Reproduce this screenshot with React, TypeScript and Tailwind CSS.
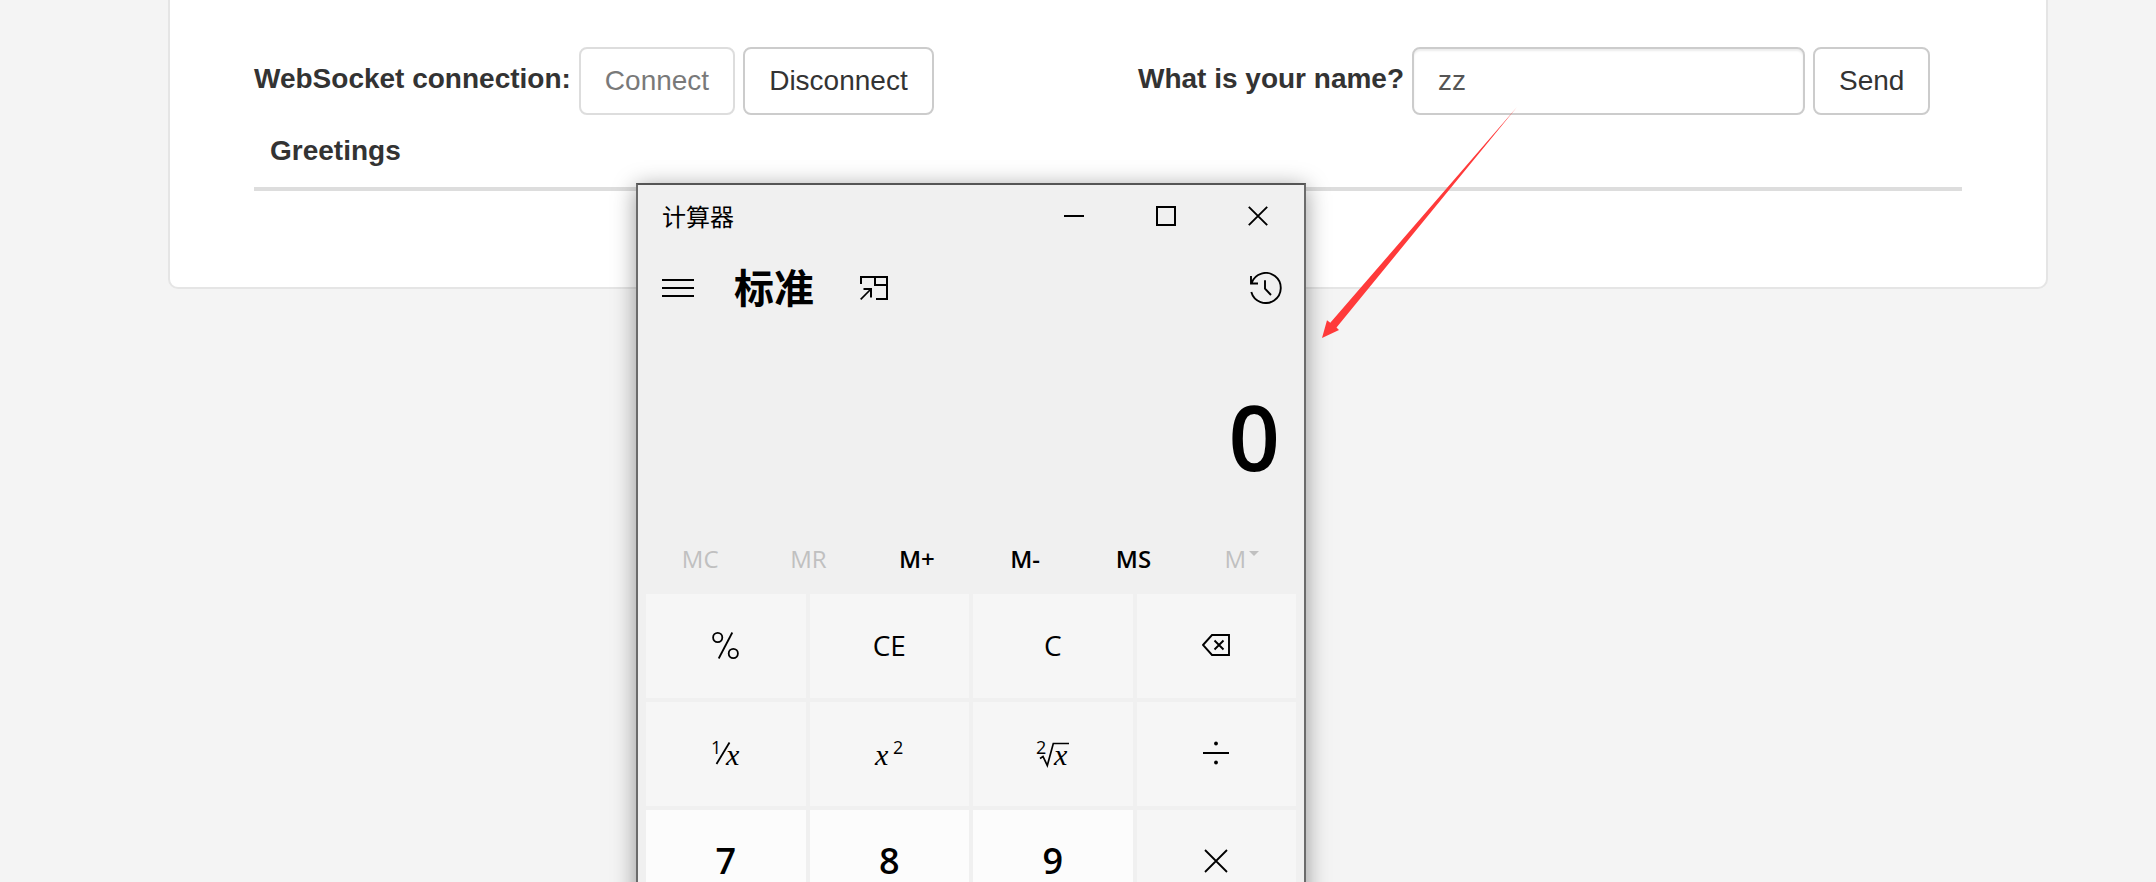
import type { ReactNode } from "react";

const button =
  "h-[68px] shrink-0 rounded-lg border-2 border-[#ccc] bg-white px-6 text-[28px] leading-10 text-[#333] disabled:opacity-65";

function ConnectionPanel() {
  return (
    <main className="rounded-b-[10px] border-2 border-t-0 border-[#e5e5e5] bg-white px-[84px] pt-[47px] pb-24">
      <div className="grid grid-cols-2 gap-[60px]">
        <form className="flex items-start gap-2" onSubmit={(e) => e.preventDefault()}>
          <label htmlFor="connect" className="shrink-0 pt-3 text-[28px] leading-10 font-bold">
            WebSocket connection:
          </label>
          <button id="connect" type="button" disabled className={button}>
            Connect
          </button>
          <button type="button" className={button}>
            Disconnect
          </button>
        </form>
        <form className="flex items-start gap-2" onSubmit={(e) => e.preventDefault()}>
          <label htmlFor="name" className="shrink-0 pt-3 text-[28px] leading-10 font-bold">
            What is your name?
          </label>
          <input
            id="name"
            type="text"
            defaultValue="zz"
            className="h-[68px] w-[393px] min-w-0 rounded-lg border-2 border-[#ccc] bg-white px-6 text-[28px] leading-10 text-[#555] shadow-[inset_0_2px_2px_rgba(0,0,0,0.075)] outline-none"
          />
          <button type="submit" className={button}>
            Send
          </button>
        </form>
      </div>
      <table className="w-full">
        <thead>
          <tr>
            <th className="border-b-4 border-[#ddd] p-4 text-left text-[28px] leading-10 font-bold">
              Greetings
            </th>
          </tr>
        </thead>
        <tbody />
      </table>
    </main>
  );
}

const serifItalic = "fill-black font-['Liberation_Serif',serif] text-[30px] italic";
const smallDigit = "fill-black font-['Open_Sans',sans-serif] text-[18px]";

function PercentIcon() {
  return (
    <svg width="27" height="27" viewBox="0 0 27 27" fill="none" stroke="#000" strokeWidth="1.8">
      <circle cx="5.7" cy="5.5" r="4.6" />
      <circle cx="21.3" cy="21.5" r="4.6" />
      <path d="M20.3.5 6.7 26.5" />
    </svg>
  );
}

function BackspaceIcon() {
  return (
    <svg width="28" height="22" viewBox="0 0 28 22" fill="none" stroke="#000" strokeWidth="1.9">
      <path d="M1 11 10 1H27V21H10ZM12.5 6.5l9 9M21.5 6.5l-9 9" />
    </svg>
  );
}

function ReciprocalIcon() {
  return (
    <svg width="28" height="28" viewBox="0 0 28 28" className="overflow-visible">
      <text x="-1" y="15" className={smallDigit}>1</text>
      <path d="M17.5 3.5 4.5 25" stroke="#000" strokeWidth="1.8" />
      <text x="14" y="26" className={serifItalic}>x</text>
    </svg>
  );
}

function SquareIcon() {
  return (
    <svg width="28" height="28" viewBox="0 0 28 28" className="overflow-visible">
      <text x="0" y="26" className={serifItalic}>x</text>
      <text x="18" y="15" className={smallDigit}>2</text>
    </svg>
  );
}

function RootIcon() {
  return (
    <svg width="32" height="28" viewBox="0 0 32 28" className="overflow-visible">
      <text x="-1" y="15" className={smallDigit}>2</text>
      <path d="M3 19.5 6 17.5 10.3 26.5 16.3 4.5H32" fill="none" stroke="#000" strokeWidth="1.7" />
      <text x="17" y="26" className={serifItalic}>x</text>
    </svg>
  );
}

function DivideIcon() {
  return (
    <svg width="26" height="26" viewBox="0 0 26 26">
      <path d="M0 13H26" stroke="#000" strokeWidth="2" />
      <circle cx="13" cy="3.5" r="1.9" />
      <circle cx="13" cy="22.5" r="1.9" />
    </svg>
  );
}

function MultiplyIcon() {
  return (
    <svg width="24" height="24" viewBox="0 0 24 24">
      <path d="M1 1 23 23M23 1 1 23" stroke="#000" strokeWidth="1.8" />
    </svg>
  );
}

type Key = { name: string; face: ReactNode; digit?: boolean };

const keys: Key[] = [
  { name: "Percent", face: <PercentIcon /> },
  { name: "Clear entry", face: "CE" },
  { name: "Clear", face: "C" },
  { name: "Backspace", face: <BackspaceIcon /> },
  { name: "Reciprocal", face: <ReciprocalIcon /> },
  { name: "Square", face: <SquareIcon /> },
  { name: "Square root", face: <RootIcon /> },
  { name: "Divide by", face: <DivideIcon /> },
  { name: "Seven", face: "7", digit: true },
  { name: "Eight", face: "8", digit: true },
  { name: "Nine", face: "9", digit: true },
  { name: "Multiply by", face: <MultiplyIcon /> },
];

const memoryKeys = [
  { label: "MC", enabled: false },
  { label: "MR", enabled: false },
  { label: "M+", enabled: true },
  { label: "M-", enabled: true },
  { label: "MS", enabled: true },
];

const caption = "flex h-[62px] w-[92px] items-center justify-center";

function Calculator() {
  return (
    <section
      aria-label="计算器"
      className="absolute top-[183px] left-[636px] w-[670px] border-2 border-[#6b6b6b] border-t-[#555] bg-[#f0f0f0] font-['Open_Sans','Noto_Sans_CJK_SC',sans-serif] text-black shadow-[0_4px_22px_rgba(0,0,0,0.4)]"
    >
      <header className="flex h-[62px] items-center">
        <h2 className="grow pl-6 font-['Noto_Sans_CJK_SC',sans-serif] text-[24px] leading-8">计算器</h2>
        <button type="button" aria-label="Minimize" className={caption}>
          <svg width="20" height="20" viewBox="0 0 20 20">
            <path d="M0 10H20" stroke="#000" strokeWidth="2" />
          </svg>
        </button>
        <button type="button" aria-label="Maximize" className={caption}>
          <svg width="20" height="20" viewBox="0 0 20 20">
            <path d="M1 1H19V19H1Z" fill="none" stroke="#000" strokeWidth="2" />
          </svg>
        </button>
        <button type="button" aria-label="Close" className={caption}>
          <svg width="20" height="20" viewBox="0 0 20 20">
            <path d="M.8.8 19.2 19.2M19.2.8.8 19.2" stroke="#000" strokeWidth="1.9" />
          </svg>
        </button>
      </header>

      <div className="flex h-[82px] items-center pr-[22px] pl-6">
        <button type="button" aria-label="Open navigation">
          <svg width="32" height="18" viewBox="0 0 32 18">
            <path d="M0 1H32M0 9H32M0 17H32" stroke="#000" strokeWidth="2" />
          </svg>
        </button>
        <h3 className="ml-10 pb-1 font-['Noto_Sans_CJK_SC',sans-serif] text-[40px] leading-[56px] font-bold">标准</h3>
        <button type="button" aria-label="Keep on top" className="ml-[46px]">
          <svg width="28" height="24" viewBox="0 0 28 24" fill="none" stroke="#000" strokeWidth="2">
            <path d="M1 8V1H27V23H16M15 1V9H27M3.5 13H11V21.5" />
            <path d="M.7 23.3 11 13" strokeWidth="1.7" />
          </svg>
        </button>
        <button type="button" aria-label="History" className="ml-auto">
          <svg width="32" height="32" viewBox="0 0 32 32" fill="none" stroke="#000" strokeWidth="1.9">
            <path d="M1 4V11.5H8M1.6 11A15 15 0 1 1 1.3 20" />
            <path d="M15 8.3V16.7L21 23" />
          </svg>
        </button>
      </div>

      <output className="flex h-[197px] items-center justify-end pt-4 pr-6 text-[90px] leading-none font-semibold">
        0
      </output>

      <div className="grid h-[68px] grid-cols-6 px-2 pb-[3px] text-[24px]">
        {memoryKeys.map(({ label, enabled }) => (
          <button
            key={label}
            type="button"
            disabled={!enabled}
            className="font-semibold disabled:font-medium disabled:text-[#c0c0c0]"
          >
            {label}
          </button>
        ))}
        <button
          type="button"
          disabled
          className="flex items-center justify-center gap-[3px] font-medium text-[#c0c0c0]"
        >
          M
          <svg width="10" height="20" viewBox="0 0 10 20">
            <path d="M0 2H10L5 7Z" fill="currentColor" />
          </svg>
        </button>
      </div>

      <div className="grid auto-rows-[104px] grid-cols-4 gap-1 px-2 pb-2">
        {keys.map(({ name, face, digit }) => (
          <button
            key={name}
            type="button"
            aria-label={name}
            className={
              digit
                ? "flex items-center justify-center bg-[#fcfcfc] pb-0.5 text-[36px] leading-none font-semibold"
                : "flex items-center justify-center bg-[#f6f6f6] pb-0.5 text-[28px] leading-none"
            }
          >
            {face}
          </button>
        ))}
      </div>
    </section>
  );
}

function PointerArrow() {
  return (
    <svg
      aria-hidden="true"
      className="pointer-events-none absolute top-[105px] left-[1320px]"
      width="200"
      height="236"
      viewBox="0 0 200 236"
    >
      <path d="M197 2 10.3 217.8 7 215.3 2 233 19 225 16.5 222.5Z" fill="#ff3a3a" />
    </svg>
  );
}

export default function App() {
  return (
    <div className="relative h-screen overflow-hidden bg-[#f4f4f4] pr-[108px] pl-[168px] font-['Liberation_Sans',Arial,sans-serif] text-[#333]">
      <ConnectionPanel />
      <Calculator />
      <PointerArrow />
    </div>
  );
}
